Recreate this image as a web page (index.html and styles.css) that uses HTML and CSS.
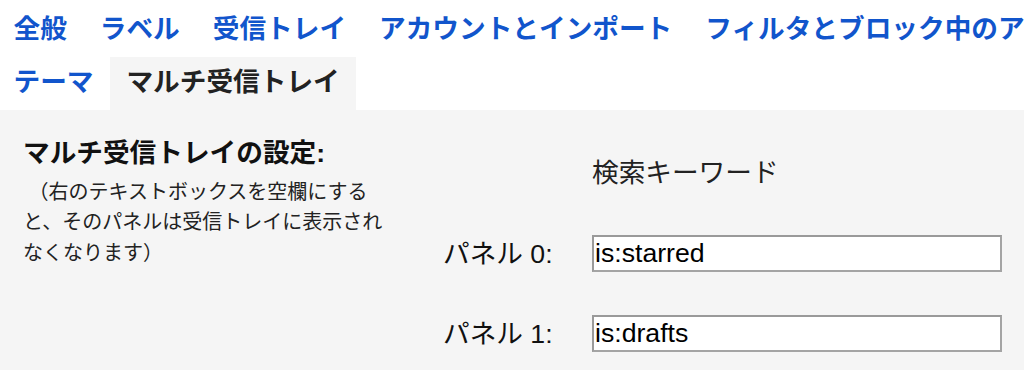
FILE: index.html
```html
<!DOCTYPE html>
<html lang="ja">
<head>
<meta charset="utf-8">
<title>マルチ受信トレイ</title>
<link rel="stylesheet" href="styles.css">
</head>
<body>
<nav class="tabs">
  <div class="tab-row">
    <a class="tab">全般</a>
    <a class="tab">ラベル</a>
    <a class="tab">受信トレイ</a>
    <a class="tab">アカウントとインポート</a>
    <a class="tab">フィルタとブロック中のアドレス</a>
  </div>
  <div class="tab-row">
    <a class="tab">テーマ</a>
    <span class="tab active">マルチ受信トレイ</span>
  </div>
</nav>
<main class="content">
  <div class="settings">
    <div class="intro">
      <div class="title">マルチ受信トレイの設定:</div>
      <div class="desc"> （右のテキストボックスを空欄にすると、そのパネルは受信トレイに表示されなくなります）</div>
    </div>
    <div class="col-head">検索キーワード</div>
    <label class="label row-a">パネル 0:</label>
    <input class="field row-a" type="text" value="is:starred">
    <label class="label row-b">パネル 1:</label>
    <input class="field row-b" type="text" value="is:drafts">
  </div>
</main>
</body>
</html>
```
FILE: styles.css
```css
html, body {
  margin: 0;
  padding: 0;
  overflow: hidden;
  background: #ffffff;
}
body {
  font-family: "Liberation Sans", "Noto Sans CJK JP", sans-serif;
  font-size: 26.67px;
  color: #222222;
  width: 1024px;
  height: 370px;
}
.tabs {
  padding-top: 4px;
  margin-left: -3px;
}
.tab-row {
  display: flex;
  white-space: nowrap;
  overflow: hidden;
}
.tab {
  flex: none;
  display: block;
  padding: 0 16.5px 2px;
  line-height: 51px;
  font-weight: bold;
  color: #1155cc;
  text-decoration: none;
}
.tab.active {
  color: #222222;
  background: #f5f5f5;
}
.content {
  background: #f5f5f5;
  height: 260px;
}
.settings {
  display: grid;
  grid-template-columns: 420px 149px 410px;
  grid-template-rows: 82px 80px 80px;
  align-items: center;
  padding: 21.5px 0 0 23px;
}
.intro {
  grid-column: 1;
  grid-row: 1 / span 3;
  align-self: start;
  padding-top: 1px;
}
.title {
  font-weight: bold;
  line-height: 40px;
  color: #111111;
}
.desc {
  margin-top: 4px;
  width: 362px;
  font-size: 20px;
  line-height: 30.5px;
  white-space: pre-wrap;
}
.col-head {
  grid-column: 3;
  grid-row: 1;
  line-height: 36px;
  color: #222222;
}
.label {
  grid-column: 2;
  color: #111111;
  line-height: 36px;
}
.row-a {
  grid-row: 2;
}
.row-b {
  grid-row: 3;
}
.field {
  grid-column: 3;
  box-sizing: border-box;
  width: 410px;
  height: 37px;
  margin: 0;
  padding: 0 1px;
  border: 2px solid #a4a4a4;
  border-top-color: #9a9a9a;
  border-left-color: #9a9a9a;
  background: #ffffff;
  font-family: "Liberation Sans", "Noto Sans CJK JP", sans-serif;
  font-size: 26.67px;
  color: #000000;
  outline: none;
}
```
